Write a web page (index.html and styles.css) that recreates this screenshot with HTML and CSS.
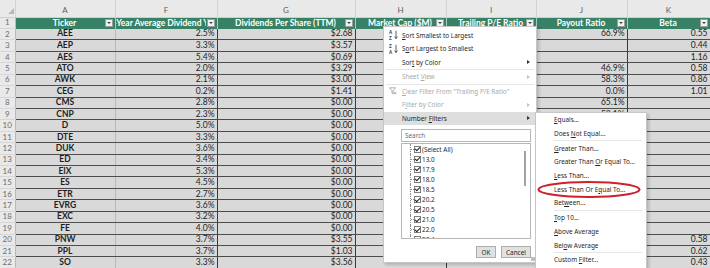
FILE: index.html
```html
<!DOCTYPE html>
<html lang="en">
<head>
    <meta charset="UTF-8">
    <title>Utilities - Number Filters</title>
    <link rel="stylesheet" href="styles.css">
</head>

<body>
    <div class="sheet">
        <table class="grid">
            <colgroup>
                <col class="w-rn">
                <col class="w-a">
                <col class="w-f">
                <col class="w-g">
                <col class="w-h">
                <col class="w-i">
                <col class="w-j">
                <col class="w-k">
            </colgroup>
            <thead>
                <tr class="letters">
                    <th class="corner"><span class="tri"></span></th>
                    <th>A</th><th>F</th><th>G</th><th>H</th><th>I</th><th>J</th><th>K</th>
                </tr>
                <tr class="head">
                    <td class="rn">1</td>
                    <th><div class="hd"><span class="label">Ticker</span><span class="fbtn"></span></div></th>
                    <th><div class="hd"><span class="label">5-Year Average Dividend Yield</span><span class="fbtn"></span></div></th>
                    <th><div class="hd"><span class="label">Dividends Per Share (TTM)</span><span class="fbtn"></span></div></th>
                    <th><div class="hd"><span class="label">Market Cap ($M)</span><span class="fbtn"></span></div></th>
                    <th><div class="hd"><span class="label">Trailing P/E Ratio</span><span class="fbtn"></span></div></th>
                    <th><div class="hd"><span class="label">Payout Ratio</span><span class="fbtn"></span></div></th>
                    <th><div class="hd"><span class="label">Beta</span><span class="fbtn"></span></div></th>
                </tr>
            </thead>
            <tbody>
                <tr><td class="rn">2</td><td class="tk">AEE</td><td>2.5%</td><td>$2.68</td><td></td><td></td><td>66.9%</td><td>0.55</td></tr>
                <tr><td class="rn">3</td><td class="tk">AEP</td><td>3.3%</td><td>$3.57</td><td></td><td></td><td></td><td>0.44</td></tr>
                <tr><td class="rn">4</td><td class="tk">AES</td><td>5.4%</td><td>$0.69</td><td></td><td></td><td></td><td>1.16</td></tr>
                <tr><td class="rn">5</td><td class="tk">ATO</td><td>2.0%</td><td>$3.29</td><td></td><td></td><td>46.9%</td><td>0.58</td></tr>
                <tr><td class="rn">6</td><td class="tk">AWK</td><td>2.1%</td><td>$3.00</td><td></td><td></td><td>58.3%</td><td>0.86</td></tr>
                <tr><td class="rn">7</td><td class="tk">CEG</td><td>0.2%</td><td>$1.41</td><td></td><td></td><td>0.0%</td><td>1.01</td></tr>
                <tr><td class="rn">8</td><td class="tk">CMS</td><td>2.8%</td><td>$0.00</td><td></td><td></td><td>65.1%</td><td></td></tr>
                <tr><td class="rn">9</td><td class="tk">CNP</td><td>2.3%</td><td>$0.00</td><td></td><td></td><td>53.1%</td><td></td></tr>
                <tr><td class="rn">10</td><td class="tk">D</td><td>5.0%</td><td>$0.00</td><td></td><td></td><td></td><td></td></tr>
                <tr><td class="rn">11</td><td class="tk">DTE</td><td>3.3%</td><td>$0.00</td><td></td><td></td><td></td><td></td></tr>
                <tr><td class="rn">12</td><td class="tk">DUK</td><td>3.6%</td><td>$0.00</td><td></td><td></td><td></td><td></td></tr>
                <tr><td class="rn">13</td><td class="tk">ED</td><td>3.4%</td><td>$0.00</td><td></td><td></td><td></td><td></td></tr>
                <tr><td class="rn">14</td><td class="tk">EIX</td><td>5.3%</td><td>$0.00</td><td></td><td></td><td></td><td></td></tr>
                <tr><td class="rn">15</td><td class="tk">ES</td><td>4.5%</td><td>$0.00</td><td></td><td></td><td></td><td></td></tr>
                <tr><td class="rn">16</td><td class="tk">ETR</td><td>2.7%</td><td>$0.00</td><td></td><td></td><td></td><td></td></tr>
                <tr><td class="rn">17</td><td class="tk">EVRG</td><td>3.6%</td><td>$0.00</td><td></td><td></td><td></td><td></td></tr>
                <tr><td class="rn">18</td><td class="tk">EXC</td><td>3.2%</td><td>$0.00</td><td></td><td></td><td></td><td></td></tr>
                <tr><td class="rn">19</td><td class="tk">FE</td><td>4.0%</td><td>$0.00</td><td></td><td></td><td></td><td></td></tr>
                <tr><td class="rn">20</td><td class="tk">PNW</td><td>3.7%</td><td>$3.55</td><td></td><td></td><td></td><td>0.58</td></tr>
                <tr><td class="rn">21</td><td class="tk">PPL</td><td>3.7%</td><td>$1.03</td><td></td><td></td><td></td><td>0.62</td></tr>
                <tr><td class="rn">22</td><td class="tk">SO</td><td>3.3%</td><td>$3.56</td><td></td><td></td><td></td><td>0.43</td></tr>
            </tbody>
        </table>

        <!-- autofilter dropdown for Trailing P/E Ratio -->
        <div class="menu">
            <div class="item">
                <span class="ico">
                    <svg width="9" height="10" viewBox="0 0 9 10"><text x="0" y="4.3" class="az">A</text><text x="0" y="9.6" class="az">Z</text><path d="M7 0.8v7.6M5.6 6.6L7 8.6 8.4 6.6" stroke="#333" fill="none" stroke-width="0.8"/></svg>
                </span>
                <span class="txt"><u>S</u>ort Smallest to Largest</span>
            </div>
            <div class="item">
                <span class="ico">
                    <svg width="9" height="10" viewBox="0 0 9 10"><text x="0" y="4.3" class="az">Z</text><text x="0" y="9.6" class="az">A</text><path d="M7 0.8v7.6M5.6 6.6L7 8.6 8.4 6.6" stroke="#333" fill="none" stroke-width="0.8"/></svg>
                </span>
                <span class="txt">S<u>o</u>rt Largest to Smallest</span>
            </div>
            <div class="item">
                <span class="ico"></span>
                <span class="txt">Sor<u>t</u> by Color</span>
                <span class="arr"></span>
            </div>
            <div class="sep"></div>
            <div class="item off">
                <span class="ico"></span>
                <span class="txt">Sheet <u>V</u>iew</span>
                <span class="arr"></span>
            </div>
            <div class="sep"></div>
            <div class="item off">
                <span class="ico">
                    <svg width="8" height="8" viewBox="0 0 8 8"><path d="M0.5 0.8h6L4.2 3.6v3.2l-1.2-0.6V3.6z" fill="none" stroke="#9a9a9a" stroke-width="0.8"/><path d="M5 5l2.4 2.4M7.4 5L5 7.4" stroke="#9a9a9a" stroke-width="0.8"/></svg>
                </span>
                <span class="txt"><u>C</u>lear Filter From "Trailing P/E Ratio"</span>
            </div>
            <div class="item off">
                <span class="ico"></span>
                <span class="txt">F<u>i</u>lter by Color</span>
                <span class="arr"></span>
            </div>
            <div class="item hot">
                <span class="ico"></span>
                <span class="txt">Number <u>F</u>ilters</span>
                <span class="arr"></span>
            </div>

            <div class="search">Search</div>

            <div class="list">
                <ul>
                    <li><span class="branch"></span><span class="cb"></span>(Select All)</li>
                    <li><span class="branch"></span><span class="cb"></span>13.0</li>
                    <li><span class="branch"></span><span class="cb"></span>17.9</li>
                    <li><span class="branch"></span><span class="cb"></span>18.0</li>
                    <li><span class="branch"></span><span class="cb"></span>18.5</li>
                    <li><span class="branch"></span><span class="cb"></span>20.2</li>
                    <li><span class="branch"></span><span class="cb"></span>20.5</li>
                    <li><span class="branch"></span><span class="cb"></span>21.0</li>
                    <li><span class="branch"></span><span class="cb"></span>22.0</li>
                    <li><span class="branch"></span><span class="cb"></span>23.4</li>
                </ul>
                <div class="scroll"><span class="thumb"></span></div>
            </div>

            <div class="btns">
                <button class="ok">OK</button>
                <button class="cancel">Cancel</button>
            </div>
        </div>

        <!-- Number Filters submenu -->
        <div class="sub">
            <div class="item"><span class="txt"><u>E</u>quals...</span></div>
            <div class="item"><span class="txt">Does <u>N</u>ot Equal...</span></div>
            <div class="sep"></div>
            <div class="item"><span class="txt"><u>G</u>reater Than...</span></div>
            <div class="item"><span class="txt">Greater Than <u>O</u>r Equal To...</span></div>
            <div class="item"><span class="txt"><u>L</u>ess Than...</span></div>
            <div class="item"><span class="txt">Less Than Or E<u>q</u>ual To...</span></div>
            <div class="item"><span class="txt">Bet<u>w</u>een...</span></div>
            <div class="sep"></div>
            <div class="item"><span class="txt"><u>T</u>op 10...</span></div>
            <div class="item"><span class="txt"><u>A</u>bove Average</span></div>
            <div class="item"><span class="txt">Bel<u>o</u>w Average</span></div>
            <div class="sep"></div>
            <div class="item"><span class="txt">Custom <u>F</u>ilter...</span></div>
        </div>

        <svg class="mark" width="106" height="19" viewBox="0 0 106 19">
            <ellipse cx="52" cy="9.5" rx="50.5" ry="7.5" fill="none" stroke="#d0202c" stroke-width="2"/>
        </svg>
    </div>
</body>

</html>
```

FILE: styles.css
```css
* {
    margin: 0;
    padding: 0;
    box-sizing: border-box;
}

body {
    background: #ffffff;
    font-family: Lato, "Liberation Sans", sans-serif;
    overflow: hidden;
}

.sheet {
    position: relative;
    width: 710px;
    height: 268px;
    overflow: hidden;
}

/* grid */

.grid {
    width: 710px;
    border-collapse: collapse;
    table-layout: fixed;
    font-size: 8.5px;
    color: #1e1e1e;
}

.w-rn { width: 15px; }
.w-a { width: 100px; }
.w-f { width: 102px; }
.w-g { width: 138px; }
.w-h { width: 91px; }
.w-i { width: 90px; }
.w-j { width: 91px; }
.w-k { width: 83px; }

.letters th {
    height: 17px;
    padding-top: 3px;
    background: #e9e9e9;
    color: #5e5e5e;
    font-weight: normal;
    font-size: 8px;
    border-right: 1px solid #d3d3d3;
    border-bottom: 1px solid #cfcfcf;
}

.letters .corner {
    padding: 0 1px 1px 0;
    vertical-align: bottom;
    text-align: right;
}

.tri {
    display: inline-block;
    width: 0;
    height: 0;
    border-left: 6px solid transparent;
    border-bottom: 6px solid #b8b8b8;
}

.head {
    height: 11.5px;
}

.head th {
    background: #378167;
    color: #ffffff;
    font-weight: bold;
    border-right: 1px solid #a9cbbf;
    padding: 0;
}

.hd {
    display: flex;
    align-items: center;
    height: 11px;
}

.label {
    flex: 1;
    display: flex;
    justify-content: center;
    overflow: hidden;
    white-space: nowrap;
    padding-left: 10px;
    line-height: 10px;
}

.fbtn {
    flex: none;
    width: 8px;
    height: 8px;
    margin: 0 2px 0 1px;
    background: #f1f1f1;
    border: 1px solid #9d9d9d;
    display: flex;
    align-items: center;
    justify-content: center;
}

.fbtn::after {
    content: '';
    border-left: 2px solid transparent;
    border-right: 2px solid transparent;
    border-top: 2px solid #444444;
}

tbody tr {
    height: 11.43px;
}

td {
    background: #d9d9d9;
    border-bottom: 1px solid #4d4d4d;
    border-right: 1px solid #3a3a3a;
    padding: 0 2px;
    text-align: right;
    white-space: nowrap;
    overflow: hidden;
    line-height: 9px;
}

td.rn {
    background: #e9e9e9;
    color: #6d6d6d;
    font-size: 8px;
    text-align: center;
    border-right: 1px solid #b9b9b9;
    border-bottom: 1px solid #d6d6d6;
    padding: 0;
}

td.tk {
    text-align: center;
    font-weight: bold;
    border-right-color: #b8b8b8;
}

/* dropdown */

.menu,
.sub {
    position: absolute;
    background: #ffffff;
    border: 1px solid #c6c6c6;
    box-shadow: 2px 2px 3px rgba(0, 0, 0, 0.18);
    font-family: "Noto Sans", sans-serif;
    font-size: 6.4px;
    color: #262626;
    display: flex;
    flex-direction: column;
}

.menu {
    left: 383px;
    top: 26px;
    width: 154px;
    height: 237px;
    padding-top: 1.5px;
}

.item {
    display: flex;
    align-items: center;
    height: 13.5px;
    padding-right: 6px;
    white-space: nowrap;
}

.ico {
    flex: none;
    width: 18px;
    display: flex;
    justify-content: center;
}

.az {
    font-family: "Noto Sans", sans-serif;
    font-size: 4.6px;
    font-weight: bold;
    fill: #35506f;
}

.txt {
    flex: 1;
}

.arr {
    width: 0;
    height: 0;
    border-top: 2.5px solid transparent;
    border-bottom: 2.5px solid transparent;
    border-left: 3px solid #333333;
}

.item.off {
    color: #a8a8a8;
}

.item.off .arr {
    border-left-color: #c2c2c2;
}

.item.hot {
    background: #dedede;
}

.sep {
    height: 1px;
    margin: 0 2px;
    background: #e6e6e6;
}

.search {
    height: 13px;
    margin: 4px 5px 0 17px;
    padding-left: 3px;
    border: 1px solid #b7b7b7;
    color: #6b6b6b;
    display: flex;
    align-items: center;
}

.list {
    height: 96px;
    margin: 1px 5px 0 17px;
    border: 1px solid #b7b7b7;
    display: flex;
    overflow: hidden;
}

.list ul {
    flex: 1;
    list-style: none;
    padding-left: 8px;
}

.list li {
    height: 10.1px;
    display: flex;
    align-items: center;
}

.branch {
    align-self: stretch;
    width: 4px;
    border-left: 1px dotted #8c8c8c;
    display: flex;
    align-items: center;
}

.branch::after {
    content: '';
    flex: 1;
    border-top: 1px dotted #8c8c8c;
}

.cb {
    width: 7px;
    height: 7px;
    margin-right: 1px;
    border: 1px solid #7c7c7c;
    display: flex;
    align-items: center;
    justify-content: center;
}

.cb::after {
    content: '';
    width: 2px;
    height: 4px;
    margin-top: -1px;
    border: solid #1f1f1f;
    border-width: 0 1.2px 1.2px 0;
    transform: rotate(45deg);
}

.scroll {
    flex: none;
    width: 10px;
    padding-top: 7px;
    display: flex;
    justify-content: center;
}

.thumb {
    width: 2px;
    height: 35px;
    background: #a3a3a3;
}

.btns {
    display: flex;
    justify-content: flex-end;
    gap: 5px;
    margin: 7px 5px 0 0;
}

.btns button {
    height: 12px;
    font: inherit;
    color: #262626;
    background: #e1e1e1;
    border: 1px solid #adadad;
}

.btns .ok {
    width: 20px;
}

.btns .cancel {
    width: 30px;
}

.menu::after {
    content: '';
    position: absolute;
    right: 1px;
    bottom: 1px;
    width: 4px;
    height: 4px;
    background: radial-gradient(circle, #9a9a9a 0.6px, transparent 0.9px) 0 0 / 2px 2px;
}

.sub {
    left: 535px;
    top: 112px;
    width: 112px;
    height: 157px;
}

.sub .item {
    height: 13.7px;
    padding-left: 18px;
}

.sub .sep {
    margin: 0 4px 0 18px;
}

.mark {
    position: absolute;
    left: 537px;
    top: 180px;
}
```
